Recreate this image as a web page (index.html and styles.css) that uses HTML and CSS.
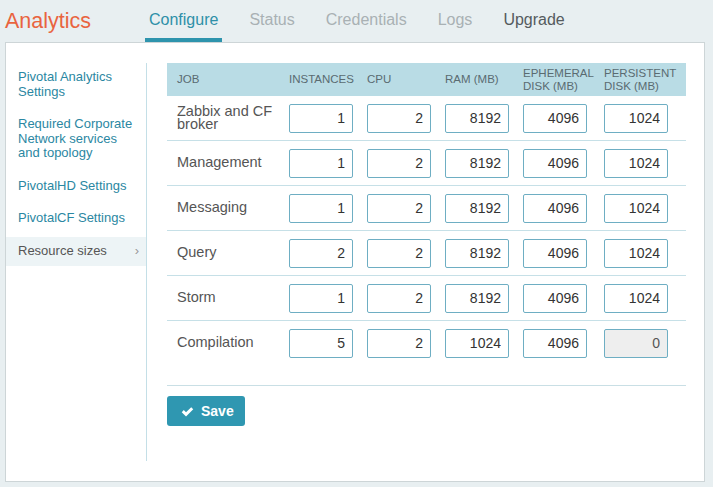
FILE: index.html
```html
<!DOCTYPE html>
<html>
<head>
<meta charset="utf-8">
<link rel="stylesheet" href="styles.css">
</head>
<body>
<header class="topbar">
  <div class="brand">Analytics</div>
  <nav class="tabs">
    <a class="tab active">Configure</a>
    <a class="tab muted">Status</a>
    <a class="tab muted">Credentials</a>
    <a class="tab muted">Logs</a>
    <a class="tab dark">Upgrade</a>
  </nav>
</header>
<main class="panel">
  <aside class="sidebar">
    <a class="side-item">Pivotal Analytics Settings</a>
    <a class="side-item">Required Corporate Network services and topology</a>
    <a class="side-item">PivotalHD Settings</a>
    <a class="side-item">PivotalCF Settings</a>
    <a class="side-item current">Resource sizes<span class="chev">&#8250;</span></a>
  </aside>
  <section class="content">
    <div class="grid head">
      <div class="c job">JOB</div>
      <div class="c">INSTANCES</div>
      <div class="c">CPU</div>
      <div class="c">RAM (MB)</div>
      <div class="c">EPHEMERAL DISK (MB)</div>
      <div class="c">PERSISTENT DISK (MB)</div>
    </div>
    <div class="grid row">
      <div class="c job name">Zabbix and CF broker</div>
      <div class="c"><input class="num" value="1"></div>
      <div class="c"><input class="num" value="2"></div>
      <div class="c"><input class="num" value="8192"></div>
      <div class="c"><input class="num" value="4096"></div>
      <div class="c"><input class="num" value="1024"></div>
    </div>
    <div class="grid row">
      <div class="c job name">Management</div>
      <div class="c"><input class="num" value="1"></div>
      <div class="c"><input class="num" value="2"></div>
      <div class="c"><input class="num" value="8192"></div>
      <div class="c"><input class="num" value="4096"></div>
      <div class="c"><input class="num" value="1024"></div>
    </div>
    <div class="grid row">
      <div class="c job name">Messaging</div>
      <div class="c"><input class="num" value="1"></div>
      <div class="c"><input class="num" value="2"></div>
      <div class="c"><input class="num" value="8192"></div>
      <div class="c"><input class="num" value="4096"></div>
      <div class="c"><input class="num" value="1024"></div>
    </div>
    <div class="grid row">
      <div class="c job name">Query</div>
      <div class="c"><input class="num" value="2"></div>
      <div class="c"><input class="num" value="2"></div>
      <div class="c"><input class="num" value="8192"></div>
      <div class="c"><input class="num" value="4096"></div>
      <div class="c"><input class="num" value="1024"></div>
    </div>
    <div class="grid row">
      <div class="c job name">Storm</div>
      <div class="c"><input class="num" value="1"></div>
      <div class="c"><input class="num" value="2"></div>
      <div class="c"><input class="num" value="8192"></div>
      <div class="c"><input class="num" value="4096"></div>
      <div class="c"><input class="num" value="1024"></div>
    </div>
    <div class="grid row last">
      <div class="c job name">Compilation</div>
      <div class="c"><input class="num" value="5"></div>
      <div class="c"><input class="num" value="2"></div>
      <div class="c"><input class="num" value="1024"></div>
      <div class="c"><input class="num" value="4096"></div>
      <div class="c"><input class="num disabled" value="0" disabled></div>
    </div>
    <div class="footer">
      <button class="save"><svg class="check" viewBox="0 0 14 11" width="13" height="11"><path d="M0.8 6.2 L3 4 L5.4 6.4 L11 0.8 L13.2 3 L5.4 10.8 Z" fill="#fff"/></svg>Save</button>
    </div>
  </section>
</main>
</body>
</html>
```
FILE: styles.css
```css
* { box-sizing: border-box; }
body {
  margin: 0;
  background: #e8eff1;
  font-family: "Liberation Sans", Arial, sans-serif;
}
.topbar {
  display: flex;
  height: 42px;
  padding-left: 5px;
}
.brand {
  width: 140px;
  font-size: 21.5px;
  line-height: 40px;
  padding-top: 1px;
  color: #e9643f;
}
.tabs {
  display: flex;
}
.tab {
  display: block;
  padding: 2px 4px 0;
  margin-right: 23px;
  font-size: 16px;
  line-height: 36px;
  border-bottom: 4px solid transparent;
}
.tab.active { color: #2e8fa8; border-bottom-color: #2e94ad; }
.tab.muted { color: #a9b1b4; }
.tab.dark { color: #555b5e; }

.panel {
  margin-left: 5px;
  width: 700px;
  height: 440px;
  background: #fff;
  border: 1px solid #cdd5d7;
  display: flex;
  padding: 20px 0;
}
.sidebar {
  width: 141px;
  border-right: 1px solid #c4dfe7;
  display: flex;
  flex-direction: column;
  gap: 3px;
}
.side-item {
  display: flex;
  justify-content: space-between;
  padding: 7px 7px 8px 12px;
  font-size: 13px;
  line-height: 14.5px;
  color: #2b87a2;
}
.side-item.current {
  background: #edf4f6;
  color: #555;
}
.chev {
  color: #999;
  font-size: 13px;
}
.content {
  margin-left: 20px;
  width: 519px;
  display: flex;
  flex-direction: column;
}
.grid {
  display: grid;
  grid-template-columns: 122px 78px 78px 78px 81px 82px;
  align-items: center;
}
.head {
  background: #b9dce5;
  height: 33px;
  font-size: 11.5px;
  line-height: 12.5px;
  color: #5a6b71;
}
.c.job { padding-left: 10px; padding-right: 12px; }
.row {
  height: 45px;
  border-bottom: 1px solid #c6e0e7;
}
.row.last { border-bottom: none; height: 44px; }
.name {
  font-size: 14.5px;
  line-height: 13.5px;
  color: #555;
}
.num {
  display: block;
  width: 64px;
  height: 29px;
  border: 1px solid #6eaec3;
  border-radius: 2px;
  background: #fff;
  text-align: right;
  padding: 0 7px 0 4px;
  font-family: "Liberation Sans", Arial, sans-serif;
  font-size: 14px;
  color: #333;
}
.num.disabled {
  background: #eeeeee;
  color: #555;
}
.footer {
  margin-top: 20px;
  border-top: 1px solid #c9dfe5;
  padding-top: 10px;
}
.save {
  display: flex;
  align-items: center;
  width: 78px;
  height: 30px;
  padding: 0 0 0 14px;
  gap: 7px;
  background: #2f97b1;
  border: none;
  border-radius: 3px;
  color: #fff;
  font-family: "Liberation Sans", Arial, sans-serif;
  font-weight: bold;
  font-size: 14px;
}
.check { display: block; }
```
